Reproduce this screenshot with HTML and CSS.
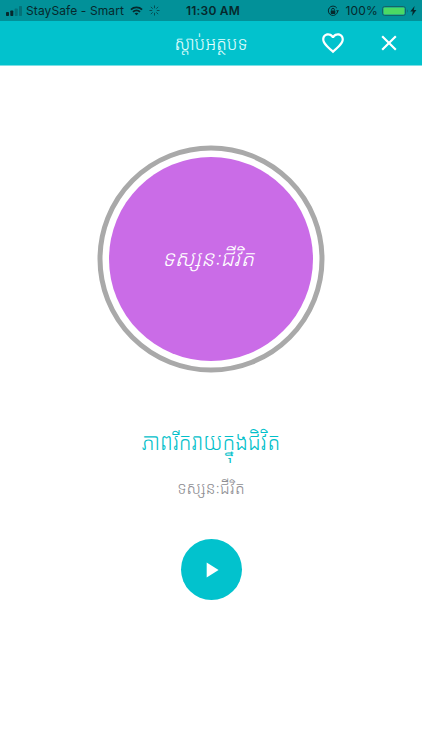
FILE: index.html
```html
<!DOCTYPE html>
<html lang="km">
<head>
<meta charset="utf-8">
<meta name="viewport" content="width=device-width, initial-scale=1">
<title>ស្តាប់អត្ថបទ</title>
<link rel="stylesheet" href="styles.css">
</head>
<body>
<div class="screen">
  <div class="status">
    <div class="status-left">
      <svg class="signal" width="17" height="10" viewBox="0 0 17 10"><rect x="0" y="6" width="3" height="4" rx=".7"/><rect x="4.3" y="4.5" width="3" height="5.5" rx=".7"/><rect class="dim" x="8.7" y="2.5" width="3" height="7.5" rx=".7"/><rect class="dim" x="13" y="0" width="3" height="10" rx=".7"/></svg>
      <span class="carrier">StaySafe - Smart</span>
      <svg class="wifi" width="13" height="10" viewBox="0 0 14 10"><path d="M1 3.6C4.3.4 9.7.4 13 3.6" /><path d="M3.2 5.9c2.2-2 5.4-2 7.6 0"/><path class="solid" d="M7 9.7 4.9 7.6c1.2-1.1 3-1.1 4.2 0z"/></svg>
      <svg class="spinner" width="11" height="11" viewBox="0 0 12 12"><path d="M6 .5v3M10 2 8 4M11.5 6h-3M10 10 8 8M6 11.5v-3M2 10l2-2M.5 6h3M2 2l2 2"/></svg>
    </div>
    <span class="clock">11:30 AM</span>
    <div class="status-right">
      <svg class="lock" width="12" height="12" viewBox="0 0 12 12"><path d="M9.8 3A4.7 4.7 0 1 0 10.7 6"/><path class="solid" d="m9 5.2 3 0-1.4 2z"/><rect class="solid" x="3.7" y="5.4" width="4.6" height="3.5" rx=".4"/><path d="M4.6 5.5V4.7a1.4 1.4 0 0 1 2.8 0v.8"/></svg>
      <span class="percent">100%</span>
      <svg class="battery" width="27" height="10" viewBox="0 0 27 10"><rect class="case" x=".5" y=".5" width="23" height="9" rx="2.2"/><rect class="charge" x="1.5" y="1.5" width="21" height="7" rx="1"/><path class="tip" d="M25 3.3q1.5 1.7 0 3.4z"/></svg>
      <svg class="bolt" width="7" height="10" viewBox="0 0 7 10"><path d="M4.6 0 .3 5.6h2.5L1.9 10l4.5-6H3.8z"/></svg>
    </div>
  </div>
  <header class="bar">
    <h1 class="bar-title">ស្តាប់អត្ថបទ</h1>
    <div class="actions">
      <svg width="26" height="26" viewBox="0 0 24 24"><path class="fill" d="M16.5 3c-1.74 0-3.41.81-4.5 2.09C10.91 3.81 9.24 3 7.5 3 4.42 3 2 5.42 2 8.5c0 3.78 3.4 6.86 8.55 11.54L12 21.35l1.45-1.32C18.6 15.36 22 12.28 22 8.5 22 5.42 19.58 3 16.5 3zm-4.4 15.55-.1.1-.1-.1C7.14 14.24 4 11.39 4 8.5 4 6.5 5.5 5 7.5 5c1.54 0 3.04.99 3.57 2.36h1.87C13.46 5.99 14.96 5 16.5 5c2 0 3.5 1.5 3.5 3.5 0 2.89-3.14 5.74-7.9 10.05z"/></svg>
      <svg width="26" height="26" viewBox="0 0 24 24"><path class="fill" d="M19 6.41 17.59 5 12 10.59 6.41 5 5 6.41 10.59 12 5 17.59 6.41 19 12 13.41 17.59 19 19 17.59 13.41 12z"/></svg>
    </div>
  </header>
  <main class="player">
    <svg class="disc" width="228" height="228" viewBox="0 0 228 228"><circle class="ring" cx="114" cy="114" r="111"/><circle class="cover" cx="114" cy="114" r="102"/><text class="cover-text" x="111" y="121" text-anchor="middle">ទស្សនៈជីវិត</text></svg>
    <h2 class="title">ភាពរីករាយក្នុងជិវិត</h2>
    <p class="category">ទស្សនៈជីវិត</p>
    <button class="play" aria-label="Play"><svg width="26" height="26" viewBox="0 0 24 24"><path class="fill" d="M8 5v14l11-7z"/></svg></button>
  </main>
</div>
</body>
</html>
```
FILE: styles.css
```css
* { box-sizing: border-box; }
body { margin: 0; background: #fff; }
svg { display: block; flex: none; }
h1, h2, p { margin: 0; font-weight: 350; white-space: nowrap; }
.screen { width: 422px; height: 750px; overflow: hidden; font-family: "Noto Sans Khmer", "Khmer OS Battambang", "Khmer OS", "Noto Sans", sans-serif; }
.status { height: 21px; background: #029199; color: #06292d; display: grid; grid-template-columns: 1fr auto 1fr; align-items: center; font: 12px/21px Inter, sans-serif; padding: 0 5px 0 6px; }
.status-left, .status-right { display: flex; align-items: center; height: 21px; }
.status-right { justify-content: flex-end; }
.status svg { fill: #06292d; }
.signal .dim { opacity: .3; }
.carrier { margin-left: 3px; letter-spacing: .1px; white-space: nowrap; }
.wifi { margin-left: 6px; }
.wifi path, .lock path { fill: none; stroke: #06292d; stroke-width: 1.9; }
.lock path { stroke-width: 1; }
.status .solid { fill: #06292d; stroke: none; }
.spinner { margin-left: 6px; }
.spinner path { stroke: #06292d; stroke-width: 1; opacity: .7; }
.clock { font-weight: 600; letter-spacing: .2px; margin-left: 3px; }
.percent { margin: 0 4px 0 6px; letter-spacing: .2px; }
.status .battery .case { fill: none; stroke: #14646a; }
.battery .charge { fill: #4cd964; }
.battery .tip { fill: #14646a; }
.bolt { margin-left: 1px; }
.bar { height: 45px; background: #02c2cd; color: #e6ffff; display: grid; grid-template-columns: 1fr auto 1fr; align-items: center; border-bottom: 1px solid #7ddfe5; }
.bar-title { grid-column: 2; font-size: 17.3px; line-height: 42px; transform: scaleY(1.12); }
.actions { display: flex; justify-content: flex-end; gap: 30px; padding-right: 20px; }
.fill { fill: #fff; }
.player { display: flex; flex-direction: column; align-items: center; padding-top: 79px; }
.ring { fill: none; stroke: #a9a9a9; stroke-width: 5; }
.cover { fill: #ca6ce7; }
.cover-text { fill: #fff; font-size: 21.7px; font-style: italic; font-weight: 330; }
.title { margin-top: 48px; height: 40px; line-height: 40px; font-size: 20.8px; color: #02bfca; transform: scaleY(1.12); }
.category { margin-top: 12px; height: 30px; line-height: 30px; font-size: 15.9px; color: #8e8e93; transform: scaleY(1.06); }
.play { margin-top: 36px; width: 61px; height: 61px; border: 0; border-radius: 50%; padding: 0; background: #02c2cd; display: flex; align-items: center; justify-content: center; }
```
